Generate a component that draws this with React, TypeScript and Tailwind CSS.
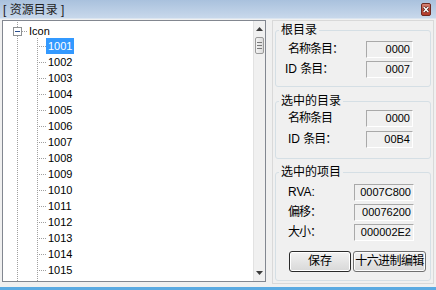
import React from "react";

const items = Array.from({ length: 15 }, (_, i) => String(1001 + i));

const dot = { stroke: "#a0a0a0", strokeDasharray: "1 1" };

function RootLines() {
  return (
    <svg width="25" height="16" className="shrink-0" shapeRendering="crispEdges">
      <line x1="14.5" y1="0" x2="14.5" y2="5" {...dot} />
      <line x1="14.5" y1="14" x2="14.5" y2="16" {...dot} />
      <rect x="10.5" y="5.5" width="8" height="8" fill="#ffffff" stroke="#8e9193" />
      <line x1="12" y1="9.5" x2="17" y2="9.5" stroke="#2b4f8f" />
      <line x1="19" y1="9.5" x2="25" y2="9.5" {...dot} />
    </svg>
  );
}

function ChildLines() {
  return (
    <svg width="43" height="16" className="shrink-0" shapeRendering="crispEdges">
      <line x1="14.5" y1="0" x2="14.5" y2="16" {...dot} />
      <line x1="34.5" y1="0" x2="34.5" y2="16" {...dot} />
      <line x1="36" y1="8.5" x2="43" y2="8.5" {...dot} />
    </svg>
  );
}

function Arrow({ up }: { up?: boolean }) {
  return (
    <svg width="7" height="4" viewBox="0 0 7 4">
      <path d={up ? "M3.5 0 L7 4 L0 4 Z" : "M0 0 L7 0 L3.5 4 Z"} fill="#3c3c3c" />
    </svg>
  );
}

function Tree() {
  return (
    <div className="flex w-[264px] h-[262px] border border-[#828790] bg-white overflow-hidden">
      <div className="flex-1 flex flex-col pt-[1px] text-[11px] leading-[16px] text-black">
        <div className="flex h-[16px] items-center">
          <RootLines />
          <span className="pl-[1px] pt-[1px]">Icon</span>
        </div>
        {items.map((it) => (
          <div key={it} className="flex h-[16px] items-center">
            <ChildLines />
            <span
              className={
                it === "1001"
                  ? "px-[2px] h-[16px] bg-[#3399ff] text-white"
                  : "px-[2px] h-[16px]"
              }
            >
              {it}
            </span>
          </div>
        ))}
        <div className="flex flex-1">
          <svg width="43" height="16" className="shrink-0" shapeRendering="crispEdges">
            <line x1="14.5" y1="0" x2="14.5" y2="16" {...dot} />
            <line x1="34.5" y1="0" x2="34.5" y2="16" {...dot} />
          </svg>
        </div>
      </div>
      <div className="w-[12px] flex flex-col items-center bg-[#f0f0f0] border-l border-[#e2e2e2]">
        <div className="h-[16px] flex items-center justify-center">
          <Arrow up />
        </div>
        <div className="flex-1 w-full flex flex-col items-center">
          <div className="w-[9px] h-[17px] rounded-[2px] border border-[#9a9a9a] bg-gradient-to-r from-[#f4f4f4] to-[#dcdcdc] flex flex-col items-center justify-center gap-[2px]">
            <div className="w-[5px] h-[1px] bg-[#7a7a7a]" />
            <div className="w-[5px] h-[1px] bg-[#7a7a7a]" />
            <div className="w-[5px] h-[1px] bg-[#7a7a7a]" />
          </div>
        </div>
        <div className="h-[16px] flex items-center justify-center">
          <Arrow />
        </div>
      </div>
    </div>
  );
}

function Value({ v, className }: { v: string; className: string }) {
  return (
    <div
      className={
        "h-[17px] border border-t-[#a9a9a9] border-l-[#a9a9a9] border-r-white border-b-white text-right pr-[2px] text-[11px] leading-[15px] text-black " +
        className
      }
    >
      {v}
    </div>
  );
}

function Row({
  label,
  value,
  labelCls,
  boxCls,
}: {
  label: React.ReactNode;
  value: string;
  labelCls: string;
  boxCls: string;
}) {
  return (
    <div className="flex items-center h-[17px]">
      <div className={"shrink-0 text-[12px] leading-[17px] whitespace-nowrap " + labelCls}>{label}</div>
      <Value v={value} className={boxCls} />
    </div>
  );
}

const cjk = "tracking-[-1px]";

export default function App() {
  return (
    <div className="w-[436px] h-[290px] bg-[#f0f0f0] flex flex-col border-b-[3px] border-[#5aaae2] font-['Liberation_Sans','Noto_Sans_CJK_SC',sans-serif] text-black">
      <div className="h-[19px] shrink-0 flex bg-gradient-to-b from-[#a9c1dd] to-[#c8d8eb] border-b border-[#dbe5f0]">
        <div className="pl-[3px] pt-[2px] text-[12px] leading-[16px] text-[#1e1e1e] whitespace-pre">[ 资源目录 ]</div>
        <div className="ml-auto mr-[5px] mt-[3px]">
          <svg width="10" height="13" viewBox="0 0 10 13">
            <defs>
              <linearGradient id="cl" x1="0" y1="0" x2="0" y2="1">
                <stop offset="0" stopColor="#d88a7c" />
                <stop offset="0.5" stopColor="#c24a3a" />
                <stop offset="1" stopColor="#b13a2a" />
              </linearGradient>
            </defs>
            <rect x="0.5" y="0.5" width="9" height="12" rx="1.5" fill="url(#cl)" stroke="#6e2a22" />
            <path d="M2.7 4 L7.3 9 M7.3 4 L2.7 9" stroke="#4a1a14" strokeWidth="2.6" />
            <path d="M2.7 4 L7.3 9 M7.3 4 L2.7 9" stroke="#ffffff" strokeWidth="1.4" />
          </svg>
        </div>
      </div>

      <div className="flex pl-[2px] pt-[1px]">
        <Tree />
        <div className="ml-[6px] w-[162px] h-[264px] border border-[#d9d9d9] pl-[2px] pr-[2px] flex flex-col">
          <fieldset className="mt-[2px] border border-[#d5dfe5] rounded-[3px] pt-[4px] pb-[8px] flex flex-col gap-[3px]">
            <legend className="ml-[3px] px-[2px] text-[12px] leading-[14px]">根目录</legend>
            <Row
              label={<span className={cjk}>名称条目：</span>}
              value="0000"
              labelCls="w-[90px] pl-[12px]"
              boxCls="w-[47px]"
            />
            <Row
              label={
                <>
                  ID <span className={cjk}>条目：</span>
                </>
              }
              value="0007"
              labelCls="w-[90px] pl-[9px]"
              boxCls="w-[47px]"
            />
          </fieldset>

          <fieldset className="mt-[7px] border border-[#d5dfe5] rounded-[3px] pt-[2px] pb-[10px] flex flex-col gap-[4px]">
            <legend className="ml-[3px] px-[2px] text-[12px] leading-[14px]">选中的目录</legend>
            <Row
              label={<span className={cjk}>名称条目</span>}
              value="0000"
              labelCls="w-[90px] pl-[12px]"
              boxCls="w-[47px]"
            />
            <Row
              label={
                <>
                  ID <span className={cjk}>条目：</span>
                </>
              }
              value="00B4"
              labelCls="w-[90px] pl-[12px]"
              boxCls="w-[47px]"
            />
          </fieldset>

          <fieldset className="mt-[6px] border border-[#d5dfe5] rounded-[3px] pt-[5px] pb-[8px] flex flex-col gap-[3px]">
            <legend className="ml-[3px] px-[2px] text-[12px] leading-[14px]">选中的项目</legend>
            <Row label="RVA:" value="0007C800" labelCls="w-[78px] pl-[12px]" boxCls="w-[60px]" />
            <Row
              label={<span className={cjk}>偏移：</span>}
              value="00076200"
              labelCls="w-[78px] pl-[12px]"
              boxCls="w-[60px]"
            />
            <Row
              label={<span className={cjk}>大小：</span>}
              value="000002E2"
              labelCls="w-[78px] pl-[12px]"
              boxCls="w-[60px]"
            />
            <div className="flex gap-[2px] pl-[13px] mt-[7px]">
              <button className="w-[62px] h-[21px] rounded-[3px] border border-[#2a2a2a] shadow-[inset_0_0_0_1px_#ffffff] bg-gradient-to-b from-[#f2f2f2] to-[#d8d8d8] text-[12px] leading-[19px] text-black">
                保存
              </button>
              <button className="w-[73px] h-[21px] rounded-[3px] border border-[#707070] shadow-[inset_0_0_0_1px_#fcfcfc] bg-gradient-to-b from-[#f2f2f2] to-[#d8d8d8] text-[12px] leading-[19px] tracking-[-0.6px] text-black whitespace-nowrap">
                十六进制编辑
              </button>
            </div>
          </fieldset>
        </div>
      </div>
    </div>
  );
}
